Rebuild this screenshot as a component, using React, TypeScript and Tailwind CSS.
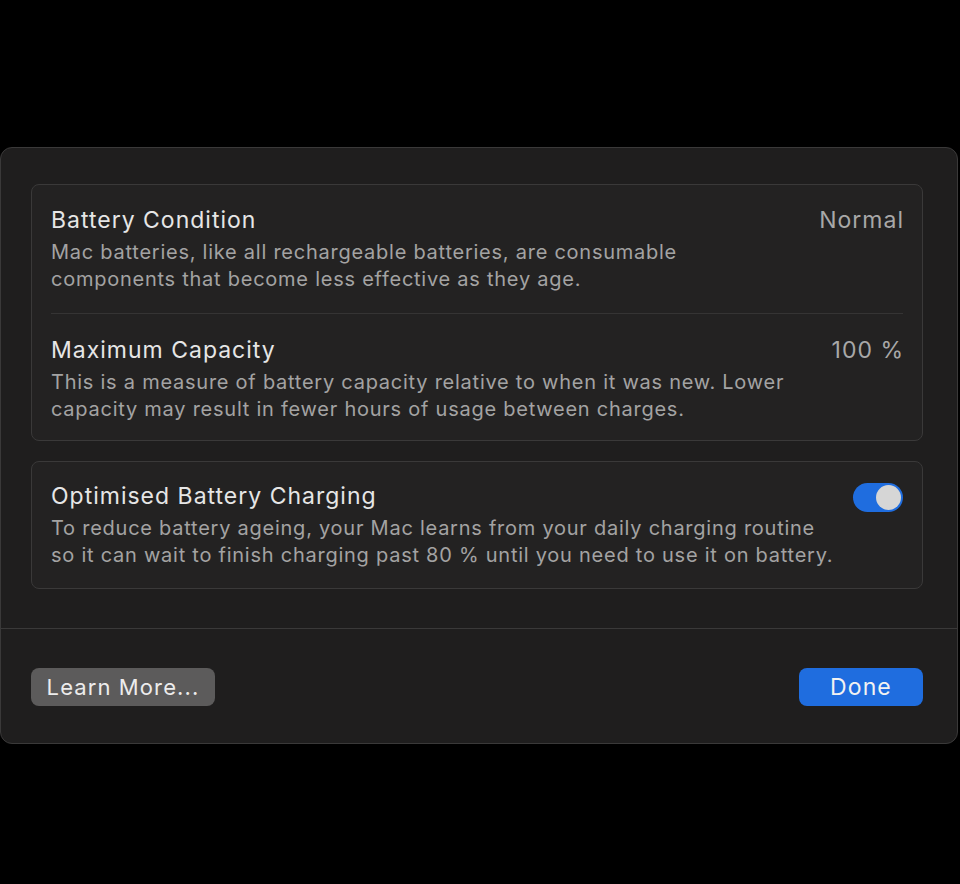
import React from "react";

const font = { fontFamily: "Inter, 'Noto Sans', sans-serif" };

function Row({
  title,
  desc,
  right,
  className = "",
}: {
  title: string;
  desc: string[];
  right?: React.ReactNode;
  className?: string;
}) {
  return (
    <div className={"flex items-start justify-between " + className}>
      <div className="flex flex-col">
        <div className="text-[23px] leading-[28px] tracking-[1px] text-[#e6e6e6]">{title}</div>
        <div className="mt-[5px] text-[20px] leading-[27px] tracking-[0.75px] text-[#a3a3a3]">
          {desc.map((d, i) => (
            <div key={i} className="whitespace-nowrap">{d}</div>
          ))}
        </div>
      </div>
      {right}
    </div>
  );
}

export default function App() {
  return (
    <div className="w-[960px] h-[884px] bg-black pt-[147px]" style={font}>
      <div className="w-[958px] h-[597px] bg-[#1f1e1e] border border-[#3a3939] rounded-[12px] flex flex-col">
        <div className="pl-[30px] pr-[34px] pt-[36px]">
          <div className="bg-[#232222] border border-[#3a3939] rounded-[8px] px-[19px]">
            <Row
              className="pt-[21px] pb-[20px]"
              title="Battery Condition"
              desc={[
                "Mac batteries, like all rechargeable batteries, are consumable",
                "components that become less effective as they age.",
              ]}
              right={<div className="mr-[-1px] text-[23px] leading-[28px] tracking-[1px] text-[#a8a8a8]">Normal</div>}
            />
            <div className="h-px bg-[#353434]" />
            <Row
              className="pt-[22px] pb-[17px]"
              title="Maximum Capacity"
              desc={[
                "This is a measure of battery capacity relative to when it was new. Lower",
                "capacity may result in fewer hours of usage between charges.",
              ]}
              right={<div className="mr-[-1px] text-[23px] leading-[28px] tracking-[1px] text-[#a8a8a8]">100 %</div>}
            />
          </div>
          <div className="mt-[20px] bg-[#232222] border border-[#3a3939] rounded-[8px] px-[19px]">
            <Row
              className="pt-[20px] pb-[19px]"
              title="Optimised Battery Charging"
              desc={[
                "To reduce battery ageing, your Mac learns from your daily charging routine",
                "so it can wait to finish charging past 80 % until you need to use it on battery.",
              ]}
              right={
                <div className="mt-[1px] w-[50px] h-[29px] shrink-0 rounded-full bg-[#1f6ddf] flex items-center justify-end pr-[2px]">
                  <div className="w-[25px] h-[25px] rounded-full bg-[#d6d6d6]" />
                </div>
              }
            />
          </div>
        </div>
        <div className="mt-[39px] h-px bg-[#3a3939]" />
        <div className="pl-[30px] pr-[34px] pt-[39px] flex justify-between">
          <button className="w-[184px] h-[38px] rounded-[8px] bg-[#5c5b5b] text-[#ececec] text-[22px] leading-[28px] tracking-[1.1px]" style={font}>
            Learn More...
          </button>
          <button className="w-[124px] h-[38px] rounded-[8px] bg-[#1f6ddf] text-[#f2f2f2] text-[23px] leading-[28px] tracking-[1.1px]" style={font}>
            Done
          </button>
        </div>
      </div>
    </div>
  );
}
